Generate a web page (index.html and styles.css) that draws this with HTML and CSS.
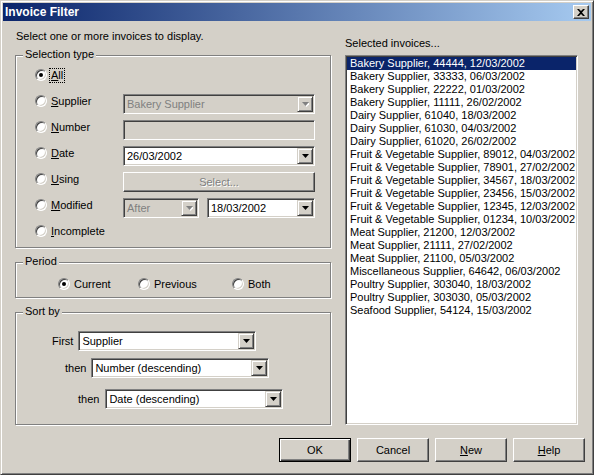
FILE: index.html
```html
<!DOCTYPE html>
<html>
<head>
<meta charset="utf-8">
<title>Invoice Filter</title>
<link rel="stylesheet" href="styles.css">
</head>
<body>
<div class="window">
  <div class="titlebar">
    <span class="title">Invoice Filter</span>
    <span class="close"><svg width="8" height="7" viewBox="0 0 8 7"><path d="M0 0h2l2 2 2-2h2L5 3.5 8 7H6L4 5 2 7H0l3-3.5z" fill="#000"/></svg></span>
  </div>
  <div class="main">
    <div class="left">
      <div class="intro">Select one or more invoices to display.</div>

      <div class="group sel">
        <span class="glabel">Selection type</span>
        <div class="srow">
          <span class="opt"><span class="radio on"></span><span class="focus"><u>A</u>ll</span></span>
        </div>
        <div class="srow">
          <span class="opt"><span class="radio"></span><span><u>S</u>upplier</span></span>
          <span class="combo dis"><span class="val">Bakery Supplier</span><span class="arrow"><svg width="7" height="5" viewBox="0 0 7 5"><path d="M1 1h7L4.5 5z" fill="#fff"/><path d="M0 0h7L3.5 4z" fill="#808080"/></svg></span></span>
        </div>
        <div class="srow">
          <span class="opt"><span class="radio"></span><span><u>N</u>umber</span></span>
          <span class="textbox dis"></span>
        </div>
        <div class="srow">
          <span class="opt"><span class="radio"></span><span><u>D</u>ate</span></span>
          <span class="combo"><span class="val">26/03/2002</span><span class="arrow"><svg width="7" height="4" viewBox="0 0 7 4"><path d="M0 0h7L3.5 4z" fill="#000"/></svg></span></span>
        </div>
        <div class="srow">
          <span class="opt"><span class="radio"></span><span><u>U</u>sing</span></span>
          <span class="btn disbtn">Select...</span>
        </div>
        <div class="srow">
          <span class="opt"><span class="radio"></span><span><u>M</u>odified</span></span>
          <span class="pair">
            <span class="combo dis after"><span class="val">After</span><span class="arrow"><svg width="7" height="5" viewBox="0 0 7 5"><path d="M1 1h7L4.5 5z" fill="#fff"/><path d="M0 0h7L3.5 4z" fill="#808080"/></svg></span></span>
            <span class="combo mdate"><span class="val">18/03/2002</span><span class="arrow"><svg width="7" height="4" viewBox="0 0 7 4"><path d="M0 0h7L3.5 4z" fill="#000"/></svg></span></span>
          </span>
        </div>
        <div class="srow">
          <span class="opt"><span class="radio"></span><span><u>I</u>ncomplete</span></span>
        </div>
      </div>

      <div class="group period">
        <span class="glabel">Period</span>
        <div class="prow">
          <span class="opt pcur"><span class="radio on"></span><span>Current</span></span>
          <span class="opt pprev"><span class="radio"></span><span>Previous</span></span>
          <span class="opt"><span class="radio"></span><span>Both</span></span>
        </div>
      </div>

      <div class="group sort">
        <span class="glabel">Sort by</span>
        <div class="krow k1">
          <span class="klabel">First</span>
          <span class="combo kcombo"><span class="val">Supplier</span><span class="arrow"><svg width="7" height="4" viewBox="0 0 7 4"><path d="M0 0h7L3.5 4z" fill="#000"/></svg></span></span>
        </div>
        <div class="krow k2">
          <span class="klabel">then</span>
          <span class="combo kcombo"><span class="val">Number (descending)</span><span class="arrow"><svg width="7" height="4" viewBox="0 0 7 4"><path d="M0 0h7L3.5 4z" fill="#000"/></svg></span></span>
        </div>
        <div class="krow k3">
          <span class="klabel">then</span>
          <span class="combo kcombo"><span class="val">Date (descending)</span><span class="arrow"><svg width="7" height="4" viewBox="0 0 7 4"><path d="M0 0h7L3.5 4z" fill="#000"/></svg></span></span>
        </div>
      </div>
    </div>

    <div class="right">
      <div class="rlabel">Selected invoices...</div>
      <div class="list">
        <div class="item selected">Bakery Supplier, 44444, 12/03/2002</div>
        <div class="item">Bakery Supplier, 33333, 06/03/2002</div>
        <div class="item">Bakery Supplier, 22222, 01/03/2002</div>
        <div class="item">Bakery Supplier, 11111, 26/02/2002</div>
        <div class="item">Dairy Supplier, 61040, 18/03/2002</div>
        <div class="item">Dairy Supplier, 61030, 04/03/2002</div>
        <div class="item">Dairy Supplier, 61020, 26/02/2002</div>
        <div class="item">Fruit &amp; Vegetable Supplier, 89012, 04/03/2002</div>
        <div class="item">Fruit &amp; Vegetable Supplier, 78901, 27/02/2002</div>
        <div class="item">Fruit &amp; Vegetable Supplier, 34567, 18/03/2002</div>
        <div class="item">Fruit &amp; Vegetable Supplier, 23456, 15/03/2002</div>
        <div class="item">Fruit &amp; Vegetable Supplier, 12345, 12/03/2002</div>
        <div class="item">Fruit &amp; Vegetable Supplier, 01234, 10/03/2002</div>
        <div class="item">Meat Supplier, 21200, 12/03/2002</div>
        <div class="item">Meat Supplier, 21111, 27/02/2002</div>
        <div class="item">Meat Supplier, 21100, 05/03/2002</div>
        <div class="item">Miscellaneous Supplier, 64642, 06/03/2002</div>
        <div class="item">Poultry Supplier, 303040, 18/03/2002</div>
        <div class="item">Poultry Supplier, 303030, 05/03/2002</div>
        <div class="item">Seafood Supplier, 54124, 15/03/2002</div>
      </div>
    </div>
  </div>
  <div class="buttons">
    <span class="btn push default">OK</span>
    <span class="btn push">Cancel</span>
    <span class="btn push"><u>N</u>ew</span>
    <span class="btn push"><u>H</u>elp</span>
  </div>
</div>
</body>
</html>
```

FILE: styles.css
```css
html, body {
  margin: 0;
  padding: 0;
  background: #D4D0C8;
}
body {
  font-family: "Liberation Sans", Arial, sans-serif;
  font-size: 11px;
  color: #000;
}
.window {
  width: 594px;
  height: 475px;
  box-sizing: border-box;
  background: #D4D0C8;
  border: 1px solid;
  border-color: #D4D0C8 #404040 #404040 #D4D0C8;
  box-shadow: inset 1px 1px 0 #fff, inset -1px -1px 0 #808080;
  padding: 2px;
  display: flex;
  flex-direction: column;
}
.titlebar {
  height: 18px;
  flex: none;
  display: flex;
  align-items: center;
  justify-content: space-between;
  padding: 0 2px 0 2px;
  background: linear-gradient(to right, #0A246A, #A6CAF0);
}
.title {
  color: #fff;
  font-weight: bold;
  font-size: 12px;
  line-height: 18px;
}
.close {
  width: 16px;
  height: 14px;
  box-sizing: border-box;
  background: #D4D0C8;
  border: 1px solid;
  border-color: #fff #404040 #404040 #fff;
  box-shadow: inset -1px -1px 0 #808080;
  display: flex;
  align-items: center;
  justify-content: center;
  padding-right: 1px;
}
.close svg { display: block; }
.main {
  display: flex;
  gap: 14px;
  padding: 8px 0 0 12px;
  flex: none;
}
.left {
  width: 316px;
  display: flex;
  flex-direction: column;
}
.intro {
  line-height: 14px;
  height: 14px;
  padding-left: 1px;
}
.group {
  position: relative;
  box-sizing: border-box;
  border: 1px solid #808080;
  box-shadow: 1px 1px 0 #fff, inset 1px 1px 0 #fff;
}
.glabel {
  position: absolute;
  top: -8px;
  left: 7px;
  padding: 0 2px;
  line-height: 13px;
  background: #D4D0C8;
}
.sel {
  margin-top: 12px;
  height: 193px;
  padding: 6px 14px 3px 19px;
}
.srow {
  height: 26px;
  display: grid;
  grid-template-columns: 88px 192px;
}
.opt {
  display: flex;
  align-items: center;
  gap: 4px;
  line-height: 13px;
}
.srow .opt { align-self: center; }
.srow > :nth-child(2) { align-self: end; }
.radio {
  position: relative;
  flex: none;
  width: 12px;
  height: 12px;
  box-sizing: border-box;
  border-radius: 50%;
  background: #fff;
  border: 1px solid;
  border-color: #808080 #fff #fff #808080;
  box-shadow: inset 1px 1px 0 #404040, inset -1px -1px 0 #D4D0C8;
}
.radio.on::after {
  content: "";
  position: absolute;
  left: 3px;
  top: 3px;
  width: 4px;
  height: 4px;
  border-radius: 50%;
  background: #000;
}
.focus {
  outline: 1px dotted #000;
  outline-offset: 0;
  padding: 0 1px;
  margin-left: -1px;
}
.combo, .textbox {
  display: flex;
  height: 20px;
  box-sizing: border-box;
  border: 1px solid;
  border-color: #808080 #fff #fff #808080;
  box-shadow: inset 1px 1px 0 #404040, inset -1px -1px 0 #D4D0C8;
  padding: 1px;
  background: #fff;
}
.combo.dis, .textbox.dis {
  background: #D4D0C8;
  color: #808080;
}
.val {
  flex: 1;
  line-height: 16px;
  padding-left: 2px;
  white-space: nowrap;
  overflow: hidden;
}
.arrow {
  flex: none;
  width: 16px;
  height: 16px;
  box-sizing: border-box;
  background: #D4D0C8;
  border: 1px solid;
  border-color: #D4D0C8 #404040 #404040 #D4D0C8;
  box-shadow: inset 1px 1px 0 #fff, inset -1px -1px 0 #808080;
  display: flex;
  align-items: center;
  justify-content: center;
}
.arrow svg { display: block; }
.btn {
  display: flex;
  align-items: center;
  justify-content: center;
  box-sizing: border-box;
  background: #D4D0C8;
  border: 1px solid;
  border-color: #fff #404040 #404040 #fff;
  box-shadow: inset -1px -1px 0 #808080;
}
.disbtn {
  height: 20px;
  color: #808080;
  text-shadow: 1px 1px 0 #fff;
}
.pair {
  display: flex;
  gap: 8px;
}
.after { width: 76px; }
.mdate { width: 108px; }
.period {
  margin-top: 14px;
  height: 36px;
  padding: 14px 0 0 42px;
}
.prow {
  display: flex;
  height: 14px;
}
.pcur { width: 80px; }
.pprev { width: 94px; }
.sort {
  margin-top: 14px;
  height: 113px;
  padding-top: 18px;
}
.krow {
  display: flex;
  align-items: center;
  gap: 5px;
  height: 20px;
}
.k1 { padding-left: 36px; }
.k2 { padding-left: 49px; margin-top: 7px; }
.k3 { padding-left: 62px; margin-top: 11px; gap: 6px; }
.kcombo { width: 178px; }
.right {
  width: 233px;
  display: flex;
  flex-direction: column;
}
.rlabel {
  margin-top: 7px;
  line-height: 14px;
  height: 14px;
}
.list {
  margin-top: 5px;
  height: 370px;
  box-sizing: border-box;
  background: #fff;
  border: 1px solid;
  border-color: #808080 #fff #fff #808080;
  box-shadow: inset 1px 1px 0 #404040, inset -1px -1px 0 #D4D0C8;
  padding: 1px;
}
.item {
  height: 13px;
  line-height: 13px;
  padding-left: 3px;
  white-space: nowrap;
}
.item.selected {
  background: #0A246A;
  color: #fff;
}
.buttons {
  display: flex;
  justify-content: flex-end;
  gap: 6px;
  margin-top: 13px;
  padding-right: 6px;
}
.push {
  width: 72px;
  height: 24px;
}
.push.default {
  border-color: #000;
  box-shadow: inset 1px 1px 0 #fff, inset -1px -1px 0 #404040, inset -2px -2px 0 #808080;
}
```
